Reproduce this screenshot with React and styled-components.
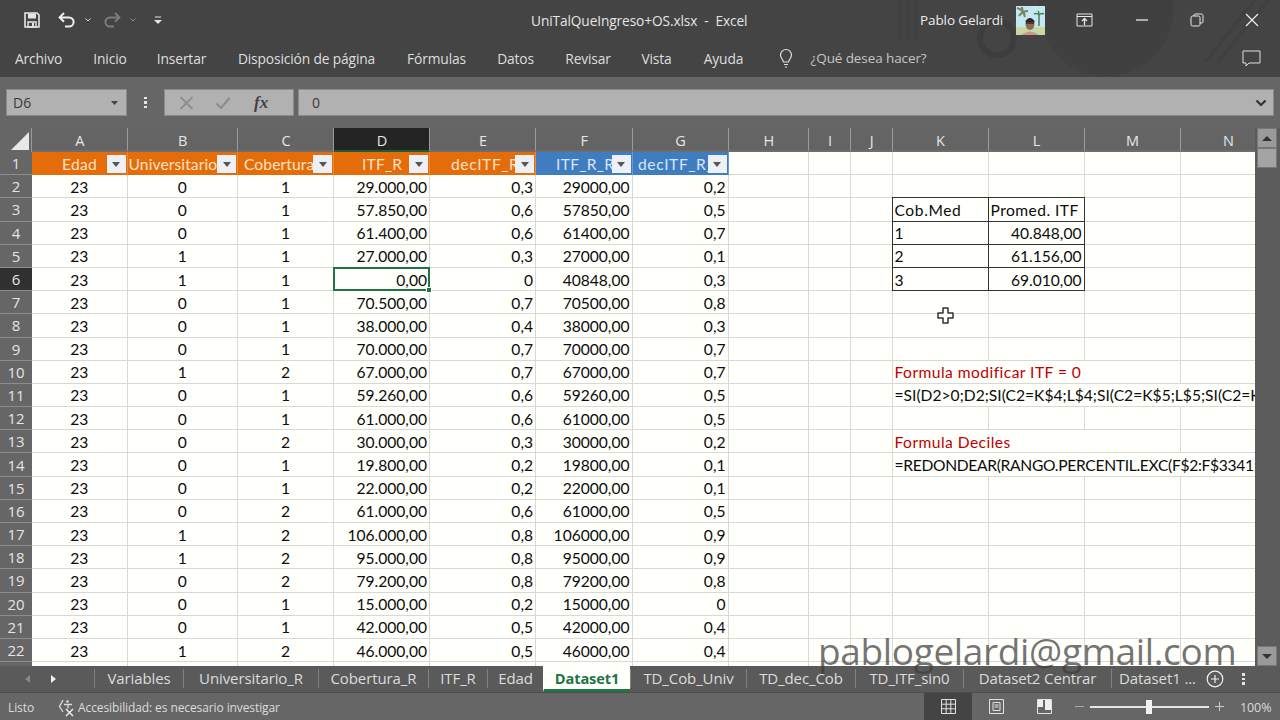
import React from "react";
import styled, { createGlobalStyle } from "styled-components";

const Global = createGlobalStyle`
  html, body { margin: 0; padding: 0; background: #444; }
  * { box-sizing: border-box; }
`;

const Window = styled.div`
  position: relative; width: 1280px; height: 720px; overflow: hidden;
  display: flex; flex-direction: column;
  font-family: "Open Sans", "Noto Sans", sans-serif; color: #e6e6e6; background: #666;
`;
const Header = styled.div`position: relative; background: #444;`;
const Art = styled.svg`position: absolute; left: 0; top: 0; pointer-events: none;`;
const TitleBar = styled.div`
  position: relative; height: 40px; display: flex; align-items: center; padding-left: 24px;
`;
const Quick = styled.div`width: 507px; display: flex; align-items: center;`;
const QuickBtn = styled.span`display: inline-flex; align-items: center; justify-content: center; margin-right: ${p => p.$gap || 0}px;`;
const DocTitle = styled.div`width: 389px; font-size: 13.7px; letter-spacing: -0.1px; white-space: pre; color: #e4e4e4;`;
const UserName = styled.div`width: 96px; font-size: 13.5px; letter-spacing: -0.1px; color: #ececec;`;
const Avatar = styled.svg`display: block; margin-right: 31px;`;
const WinBtns = styled.div`display: flex; align-items: center; gap: 41px;`;
const Ribbon = styled.div`
  position: relative; height: 37px; padding: 0 15px 1px; display: flex; align-items: center; gap: 31.5px;
`;
const RibbonTab = styled.span`
  width: ${p => p.$w}px; flex: none; display: flex; justify-content: center;
  font-size: 13.8px; letter-spacing: -0.15px; color: #dedede; white-space: nowrap;
`;
const TellMe = styled.span`display: flex; align-items: center; gap: 17px; font-size: 13.5px; letter-spacing: -0.1px; color: #c4c4c4; margin-left: 2px; flex: 1;`;
const FormulaRow = styled.div`height: 51px; padding: 12px 6px 12px; display: flex; align-items: stretch; background: #666;`;
const NameBox = styled.div`
  width: 121px; background: #b1b1b1; border: 1px solid #8a8a8a; display: flex; align-items: center; justify-content: space-between;
  padding: 0 8px 0 6px; font-size: 14px; color: #3a3a3a;
`;
const Dots = styled.div`width: 37px; display: flex; flex-direction: column; align-items: center; justify-content: center; gap: 2px;`;
const Dot = styled.i`width: 2.5px; height: 2.5px; background: #e6e6e6;`;
const FnBox = styled.div`
  width: 130px; margin-right: 4px; background: #b1b1b1; border: 1px solid #8a8a8a; display: flex; align-items: center;
  padding-left: 14px; gap: 21px;
`;
const Fx = styled.span`font: italic 700 17px "Liberation Serif", serif; color: #444; margin-left: 2px;`;
const FormulaInput = styled.div`
  flex: 1; background: #b1b1b1; border: 1px solid #8a8a8a; display: flex; align-items: center; justify-content: space-between;
  padding: 0 6px 0 13px; font-size: 14px; color: #3a3a3a;
`;
const SheetArea = styled.div`position: relative; height: 538px; display: flex; background: #666;`;
const Grid = styled.div`
  width: 1255px; height: 538px; overflow: hidden; display: grid; background: #fffffb;
  grid-template-columns: 32px 95.5px 110.5px 96px 96px 106px 96.5px 96px 80.5px 42px 41.5px 96px 96px 96px 96px;
  grid-template-rows: 24px repeat(23, 23.2px);
  font-family: Lato, "Open Sans", sans-serif; font-size: 15.6px; color: #0c0c0c;
`;
const Corner = styled.div`position: relative; background: #666; border-right: 1px solid #999;`;
const CornerMark = styled.svg`position: absolute; right: 2px; bottom: 2px;`;
const ColHead = styled.div`
  display: flex; align-items: center; justify-content: center; padding: 3px 0 0 1px;
  background: ${p => p.$active ? "#242424" : "#646464"}; border-right: 1px solid #9a9a9a;
  border-bottom: 2px solid ${p => p.$active ? "#1f5c3a" : "#6d6d6d"};
  font: 14.5px "Open Sans", sans-serif; color: #e6e6e6;
`;
const RowHead = styled.div`
  display: flex; align-items: center; justify-content: center;
  background: ${p => p.$active ? "#303030" : "#666"}; border-bottom: 1px solid #8d8d8d;
  font: 15px "Open Sans", sans-serif; color: #e4e4e4;
`;
const FilterHead = styled.div`
  position: relative; overflow: hidden; display: flex; align-items: center; white-space: nowrap; padding-left: ${p => p.$pad}px;
  background: ${p => p.$bg}; color: ${p => p.$fg}; border-right: 1px solid ${p => p.$line}; letter-spacing: ${p => p.$ls}px; font-size: 15.6px;
`;
const FilterBtn = styled.span`
  position: absolute; right: 1px; top: 3px; width: 19px; height: 18px; background: #edf1f5; display: flex; align-items: center; justify-content: center;
`;
const Arrow = styled.i`width: 0; height: 0; border: 4.5px solid transparent; border-top: 5px solid #555; border-bottom: 0;`;
const Cell = styled.div`
  position: relative; white-space: nowrap; overflow: hidden; display: flex; align-items: center; padding: 1px 2px 0;
  justify-content: ${p => p.$align === "right" ? "flex-end" : p.$align === "center" ? "center" : "flex-start"};
  grid-column: ${p => p.$span ? `span ${p.$span}` : "auto"};
  color: ${p => p.$red ? "#c00000" : "inherit"};
  letter-spacing: ${p => p.$ls || 0}px;
  border-right: 1px solid ${p => p.$box ? "#333" : p.$span ? "transparent" : "#d8d8d4"};
  border-bottom: 1px solid ${p => p.$box ? "#333" : "#d8d8d4"};
  ${p => p.$boxTop ? "border-top: 1px solid #333; margin-top: -1px;" : ""}
  ${p => p.$boxLeft ? "border-left: 1px solid #333; margin-left: -1px;" : ""}
`;
const Selected = styled(Cell)`
  overflow: visible; border: 2px solid #217346; margin: -1px 0 0 -1px; z-index: 2; padding-right: 1px;
`;
const Handle = styled.i`position: absolute; right: -4px; bottom: -4px; width: 6px; height: 6px; background: #217346; border: 1px solid #fff;`;
const ScrollBar = styled.div`
  width: 25px; padding: 0 2px 0 2px; display: flex; flex-direction: column; background: #5c5c5c;
`;
const ScrollArrow = styled.div`
  height: 20px; width: 20px; background: #9a9a9a; border: 1px solid #777; display: flex; align-items: center; justify-content: center;
`;
const ScrollThumb = styled.div`height: 20px; width: 20px; background: #a4a4a4; border: 1px solid #777; margin-bottom: auto;`;
const TriUp = styled.i`width: 0; height: 0; border: 5px solid transparent; border-bottom: 5px solid #333; border-top: 0;`;
const TriDown = styled.i`width: 0; height: 0; border: 5px solid transparent; border-top: 5px solid #333; border-bottom: 0;`;
const Watermark = styled.div`
  position: absolute; left: 818px; top: 499px; font: 37px/48px "Open Sans", sans-serif; letter-spacing: -0.35px; color: rgba(62,62,62,.72); white-space: nowrap;
`;
const CrossCursor = styled.svg`position: absolute; left: 937px; top: 179px;`;
const TabBar = styled.div`height: 27px; display: flex; align-items: stretch; background: #5a5a5a; border-bottom: 1px solid #4d4d4d;`;
const TabNav = styled.div`width: 94px; display: flex; align-items: center; padding-left: 25px; gap: 21px;`;
const TriLeft = styled.i`width: 0; height: 0; border: 4px solid transparent; border-right: 5px solid ${p => p.$c}; border-left: 0;`;
const TriRight = styled.i`width: 0; height: 0; border: 4px solid transparent; border-left: 5px solid ${p => p.$c}; border-right: 0;`;
const SheetTab = styled.div`
  width: ${p => p.$w}px; flex: none; display: flex; align-items: center; justify-content: center; white-space: nowrap; margin-top: ${p => p.$active ? 0 : 3}px;
  margin-bottom: ${p => p.$active ? 0 : 4}px; padding-bottom: ${p => p.$active ? 0 : 2}px;
  font-size: ${p => p.$active ? 14.6 : 15}px; letter-spacing: -0.1px; font-weight: ${p => p.$active ? 700 : 400};
  color: ${p => p.$active ? "#217346" : "#dcdcdc"}; background: ${p => p.$active ? "#fffffb" : "transparent"};
  border-left: 1px solid ${p => p.$active ? "transparent" : "#808080"};
  border-bottom: ${p => p.$active ? "3px solid #217346" : "0"};
`;
const TabTools = styled.div`display: flex; align-items: center; padding-left: 3px; gap: 18px;`;
const TabDots = styled.span`display: flex; flex-direction: column; gap: 2px;`;
const StatusBar = styled.div`height: 27px; display: flex; align-items: stretch; background: #666; font-size: 12px; color: #dcdcdc;`;
const StatusText = styled.span`display: flex; align-items: center; padding-top: 1px; margin-left: ${p => p.$ml || 0}px; width: ${p => p.$w || "auto"}; letter-spacing: -0.1px; font-size: ${p => p.$size || 12}px;`;
const StatusIcon = styled.svg`align-self: center;`;
const ViewBtn = styled.div`width: 48px; display: flex; align-items: center; justify-content: center; background: ${p => p.$on ? "#444" : "transparent"};`;
const ZoomWrap = styled.div`display: flex; align-items: center; margin-left: 6px;`;
const ZoomTrack = styled.div`position: relative; width: 119px; height: 2px; background: #e6e6e6; margin: 0 5px 0 5px;`;
const ZoomThumb = styled.i`position: absolute; left: 56px; top: -6px; width: 6px; height: 14px; background: #f2f2f2;`;

const A = "#e6e6e6";
const SaveIcon = () => <svg width="16" height="16" viewBox="0 0 16 16"><path d="M1 1h12l2 2v12H1z" fill="none" stroke={A} strokeWidth="1.6"/><path d="M4 1.5h8v5H4z" fill={A}/><path d="M4 10h8v5H4z" fill="none" stroke={A} strokeWidth="1.4"/><path d="M8 11h2v3H8z" fill={A}/></svg>;
const Undo = ({ c, flip }) => <svg width="18" height="16" viewBox="0 0 18 16" style={flip ? { transform: "scaleX(-1)" } : undefined}><path d="M6 1 1.6 5.4 6 9.8M2 5.4h9a4.6 4.6 0 0 1 0 9.2H7" fill="none" stroke={c} strokeWidth="2"/></svg>;
const Chev = ({ c }) => <svg width="6" height="4" viewBox="0 0 6 4"><path d="M.5.5 3 3l2.5-2.5" fill="none" stroke={c} strokeWidth="1"/></svg>;
const Custom = () => <svg width="8" height="9" viewBox="0 0 8 9"><path d="M1 1h6" stroke={A}/><path d="M0 4h8L4 8z" fill={A}/></svg>;

const ribbonTabs = [["Archivo", 47], ["Inicio", 33], ["Insertar", 47], ["Disposición de página", 140], ["Fórmulas", 57], ["Datos", 38], ["Revisar", 44], ["Vista", 30], ["Ayuda", 41]];
const cols = ["A", "B", "C", "D", "E", "F", "G", "H", "I", "J", "K", "L", "M", "N"];
const headers = [
  ["Edad", "o", 0.3, 30], ["Universitario", "o", 0.1, 1], ["Cobertura", "o", 0.1, 6], ["ITF_R", "o", 0.2, 28], ["decITF_R", "o", 0.6, 21], ["ITF_R_R", "b", 0.3, 20], ["decITF_R_", "b", 0.6, 5.5],
];
const B = [0,0,0,1,1,0,0,0,1,0,0,0,0,0,0,1,1,0,0,0,1];
const C = [1,1,1,1,1,1,1,1,2,1,1,2,1,1,2,2,2,2,1,1,2];
const D = ["29.000,00","57.850,00","61.400,00","27.000,00","0,00","70.500,00","38.000,00","70.000,00","67.000,00","59.260,00","61.000,00","30.000,00","19.800,00","22.000,00","61.000,00","106.000,00","95.000,00","79.200,00","15.000,00","42.000,00","46.000,00"];
const E = ["0,3","0,6","0,6","0,3","0","0,7","0,4","0,7","0,7","0,6","0,6","0,3","0,2","0,2","0,6","0,8","0,8","0,8","0,2","0,5","0,5"];
const F = ["29000,00","57850,00","61400,00","27000,00","40848,00","70500,00","38000,00","70000,00","67000,00","59260,00","61000,00","30000,00","19800,00","22000,00","61000,00","106000,00","95000,00","79200,00","15000,00","42000,00","46000,00"];
const G = ["0,2","0,5","0,7","0,1","0,3","0,8","0,3","0,7","0,7","0,5","0,5","0,2","0,1","0,1","0,5","0,9","0,9","0,8","0","0,4","0,4"];

const side = {
  3: [["Cob.Med", "left", 0.6], ["Promed. ITF", "left", 0.45]],
  4: [["1", "left"], ["40.848,00", "right"]],
  5: [["2", "left"], ["61.156,00", "right"]],
  6: [["3", "left"], ["69.010,00", "right"]],
};
const notes = {
  10: { text: "Formula modificar ITF = 0", red: true, span: 2, ls: 0.45 },
  11: { text: "=SI(D2>0;D2;SI(C2=K$4;L$4;SI(C2=K$5;L$5;SI(C2=K$6;L$6))))", span: 4, ls: 0.02 },
  13: { text: "Formula Deciles", red: true, span: 2, ls: 0.45 },
  14: { text: "=REDONDEAR(RANGO.PERCENTIL.EXC(F$2:F$3341;F2);1)", span: 4, ls: -0.3 },
};

const tabs = [
  ["Variables", 89], ["Universitario_R", 135], ["Cobertura_R", 110], ["ITF_R", 59], ["Edad", 56], ["Dataset1", 87, true],
  ["TD_Cob_Univ", 116], ["TD_dec_Cob", 109], ["TD_ITF_sin0", 108], ["Dataset2 Centrar", 148], ["Dataset1 ...", 92],
];

function buildRows() {
  const out = [];
  for (let r = 2; r <= 23; r++) {
    const i = r - 2;
    const active = r === 6;
    out.push(<RowHead key={`h${r}`} $active={active}>{r < 23 ? r : ""}</RowHead>);
    const has = r < 23;
    out.push(<Cell key={`a${r}`} $align="center">{has && 23}</Cell>);
    out.push(<Cell key={`b${r}`} $align="center">{has && B[i]}</Cell>);
    out.push(<Cell key={`c${r}`} $align="center">{has && C[i]}</Cell>);
    out.push(active
      ? <Selected key={`d${r}`} $align="right">{D[i]}<Handle /></Selected>
      : <Cell key={`d${r}`} $align="right">{has && D[i]}</Cell>);
    out.push(<Cell key={`e${r}`} $align="right">{has && E[i]}</Cell>);
    out.push(<Cell key={`f${r}`} $align="right">{has && F[i]}</Cell>);
    out.push(<Cell key={`g${r}`} $align="right">{has && G[i]}</Cell>);
    out.push(<Cell key={`h_${r}`} />, <Cell key={`i${r}`} />, <Cell key={`j${r}`} />);
    if (side[r]) {
      out.push(<Cell key={`k${r}`} $box $boxLeft $boxTop={r === 3} $align={side[r][0][1]} $ls={side[r][0][2]}>{side[r][0][0]}</Cell>);
      out.push(<Cell key={`l${r}`} $box $boxTop={r === 3} $align={side[r][1][1]} $ls={side[r][1][2]}>{side[r][1][0]}</Cell>);
      out.push(<Cell key={`m${r}`} />, <Cell key={`n${r}`} />);
    } else if (notes[r]) {
      const n = notes[r];
      out.push(<Cell key={`k${r}`} $span={n.span} $red={n.red} $ls={n.ls}>{n.text}</Cell>);
      if (n.span === 2) out.push(<Cell key={`m${r}`} />, <Cell key={`n${r}`} />);
    } else {
      out.push(<Cell key={`k${r}`} />, <Cell key={`l${r}`} />, <Cell key={`m${r}`} />, <Cell key={`n${r}`} />);
    }
  }
  return out;
}

export default function App() {
  return (
    <Window>
      <Global />
      <Header>
        <Art width="1280" height="77" viewBox="0 0 1280 77">
          <circle cx="997" cy="38" r="17" fill="none" stroke="#3d3d3d" strokeWidth="6" />
          <circle cx="1106" cy="8" r="68" fill="#404040" />
          <path d="M900 0v40M908 0v40M916 0v40M1205 62l50-62M1218 62l50-62" stroke="#404040" strokeWidth="3" />
        </Art>
        <TitleBar>
          <Quick>
            <QuickBtn $gap={18}><SaveIcon /></QuickBtn>
            <QuickBtn $gap={9}><Undo c="#f0f0f0" /></QuickBtn>
            <QuickBtn $gap={12}><Chev c="#d8d8d8" /></QuickBtn>
            <QuickBtn $gap={9}><Undo c="#7c7c7c" flip /></QuickBtn>
            <QuickBtn $gap={18}><Chev c="#8a8a8a" /></QuickBtn>
            <QuickBtn><Custom /></QuickBtn>
          </Quick>
          <DocTitle>{"UniTalQueIngreso+OS.xlsx  -  Excel"}</DocTitle>
          <UserName>Pablo Gelardi</UserName>
          <Avatar width="29" height="29" viewBox="0 0 29 29">
            <rect width="29" height="29" fill="#c4e8f2" />
            <rect y="21" width="29" height="8" fill="#c9d6a6" />
            <path d="M1 2c4 1 7 4 8 9M3 10c2-3 5-5 9-5M6 1c0 3 1 6 3 8" stroke="#7a8260" strokeWidth="2" fill="none" />
            <path d="M23 20V9M23 9c-2-2-3-2-5-1M23 9c2-2 3-2 5-1M23 9c0-2 0-3-1-4" stroke="#4e7f58" strokeWidth="1.5" fill="none" />
            <ellipse cx="14" cy="18" rx="4.500" ry="6" fill="#8d6a58" />
            <path d="M9.500 15q4.500-6 9 0v1h-9z" fill="#2d2523" />
            <path d="M10 17h8" stroke="#332826" strokeWidth="1.500" />
            <path d="M5 29q9-7 18 0z" fill="#c59a88" />
          </Avatar>
          <WinBtns>
            <svg width="18" height="14" viewBox="0 0 18 14"><path d="M1 1h15v12H1zM1 3.5h15" fill="none" stroke={A} /><path d="M8.5 12V6M6 8l2.5-2.5L11 8" fill="none" stroke={A} strokeWidth="1.3" /></svg>
            <svg width="14" height="14" viewBox="0 0 14 14"><path d="M1 7h12" stroke={A} strokeWidth="1.3" /></svg>
            <svg width="14" height="14" viewBox="0 0 14 14"><rect x="1" y="3" width="9" height="10" rx="1.5" fill="none" stroke={A} /><path d="M4 3V2.2C4 1.5 4.5 1 5.2 1H11.5C12.3 1 13 1.7 13 2.5V9c0 .6-.5 1-1 1h-2" fill="none" stroke={A} /></svg>
            <svg width="14" height="14" viewBox="0 0 14 14"><path d="M1 1l12 12M13 1 1 13" stroke="#f0f0f0" strokeWidth="1.2" /></svg>
          </WinBtns>
        </TitleBar>
        <Ribbon>
          {ribbonTabs.map(([t, w]) => <RibbonTab key={t} $w={w}>{t}</RibbonTab>)}
          <TellMe>
            <svg width="16" height="20" viewBox="0 0 16 20"><path d="M5.5 14c0-2-3-3.5-3-7a5.500 5.500 0 0 1 11 0c0 3.5-3 5-3 7zM6 16.500h4M7 19h2" fill="none" stroke="#e0e0e0" strokeWidth="1.2" /></svg>
            ¿Qué desea hacer?
          </TellMe>
          <svg width="19" height="17" viewBox="0 0 19 17" style={{ marginRight: 4 }}><path d="M1 1h17v12H7l-3 3v-3H1z" fill="none" stroke="#dedede" /></svg>
        </Ribbon>
      </Header>
      <FormulaRow>
        <NameBox>D6<svg width="7" height="4" viewBox="0 0 7 4"><path d="M0 0h7L3.500 4z" fill="#444" /></svg></NameBox>
        <Dots><Dot /><Dot /><Dot /></Dots>
        <FnBox>
          <svg width="15" height="14" viewBox="0 0 15 14"><path d="M1.500 1 13.500 13M13.500 1 1.500 13" stroke="#8c8c8c" strokeWidth="1.800" /></svg>
          <svg width="16" height="14" viewBox="0 0 16 14"><path d="M1.500 7.500 6 12 14.500 2" fill="none" stroke="#8c8c8c" strokeWidth="2.200" /></svg>
          <Fx>fx</Fx>
        </FnBox>
        <FormulaInput>0<svg width="12" height="8" viewBox="0 0 12 8"><path d="M1.500 1.500 6 6l4.500-4.500" fill="none" stroke="#333" strokeWidth="2.200" /></svg></FormulaInput>
      </FormulaRow>
      <SheetArea>
        <Grid>
          <Corner><CornerMark width="18" height="18" viewBox="0 0 18 18"><path d="M18 0v18H0z" fill="#e8e8e8" /></CornerMark></Corner>
          {cols.map(c => <ColHead key={c} $active={c === "D"}>{c}</ColHead>)}
          <RowHead>1</RowHead>
          {headers.map(([t, k, ls, pad]) => (
            <FilterHead key={t} $ls={ls} $pad={pad} $bg={k === "o" ? "#e46c0a" : "#3f7cc0"} $fg={k === "o" ? "#fde3c4" : "#d7e6f6"} $line={k === "o" ? "#e9883a" : "#6a9ad0"}>
              {t}
              <FilterBtn><Arrow /></FilterBtn>
            </FilterHead>
          ))}
          <Cell /><Cell /><Cell /><Cell /><Cell /><Cell /><Cell />
          {buildRows()}
        </Grid>
        <ScrollBar>
          <ScrollArrow><TriUp /></ScrollArrow>
          <ScrollThumb />
          <ScrollArrow><TriDown /></ScrollArrow>
        </ScrollBar>
        <CrossCursor width="18" height="18" viewBox="0 0 18 18"><path d="M6 1h5v5h5v5h-5v5H6v-5H1V6h5z" fill="#fff" stroke="#333" strokeWidth="1.5" strokeLinejoin="round" /></CrossCursor>
        <Watermark>pablogelardi@gmail.com</Watermark>
      </SheetArea>
      <TabBar>
        <TabNav><TriLeft $c="#8a8a8a" /><TriRight $c="#f0f0f0" /></TabNav>
        {tabs.map(([t, w, active]) => <SheetTab key={t} $w={w} $active={active}>{t}</SheetTab>)}
        <TabTools>
          <svg width="18" height="18" viewBox="0 0 18 18"><circle cx="9" cy="9" r="7.800" fill="none" stroke="#efefef" strokeWidth="1.200" /><path d="M9 5v8M5 9h8" stroke="#efefef" strokeWidth="1.200" /></svg>
          <TabDots><Dot /><Dot /><Dot /></TabDots>
        </TabTools>
      </TabBar>
      <StatusBar>
        <StatusText $ml={8} $w="50px">Listo</StatusText>
        <StatusIcon width="20" height="20" viewBox="0 0 20 20"><path d="M5 3 1.500 9.500 5 15" fill="none" stroke="#dcdcdc" strokeWidth="1.300" /><circle cx="9.500" cy="4.500" r="1.300" fill="#dcdcdc" /><path d="M6 7.500h8M10 7.500v4" fill="none" stroke="#dcdcdc" strokeWidth="1.300" /><path d="M8 12l7 7M15 12l-7 7" stroke="#f2f2f2" strokeWidth="1.400" /></StatusIcon>
        <StatusText $w="846px">Accesibilidad: es necesario investigar</StatusText>
        <ViewBtn $on><svg width="15" height="15" viewBox="0 0 15 15"><path d="M.5.500h14v14H.5zM5.200.500v14M9.800.500v14M.5 5.200h14M.5 9.800h14" fill="none" stroke="#e0e0e0" /></svg></ViewBtn>
        <ViewBtn><svg width="15" height="15" viewBox="0 0 15 15"><path d="M.5.500h14v14H.5zM4 3.500h7v8H4zM5.500 6h4M5.500 8h4" fill="none" stroke="#e0e0e0" /></svg></ViewBtn>
        <ViewBtn><svg width="15" height="15" viewBox="0 0 15 15"><path d="M.5.500h14v14H.5z" fill="none" stroke="#e0e0e0" /><path d="M1 1h5v7H1zM8 1h6v10H8z" fill="#efefef" /></svg></ViewBtn>
        <ZoomWrap>
          <svg width="11" height="11" viewBox="0 0 11 11"><path d="M1 5.500h9" stroke="#a8a8a8" /></svg>
          <ZoomTrack><ZoomThumb /></ZoomTrack>
          <svg width="11" height="11" viewBox="0 0 11 11"><path d="M1 5.500h9M5.500 1v9" stroke="#c8c8c8" /></svg>
        </ZoomWrap>
        <StatusText $ml={15} $size={12.5}>100%</StatusText>
      </StatusBar>
    </Window>
  );
}
